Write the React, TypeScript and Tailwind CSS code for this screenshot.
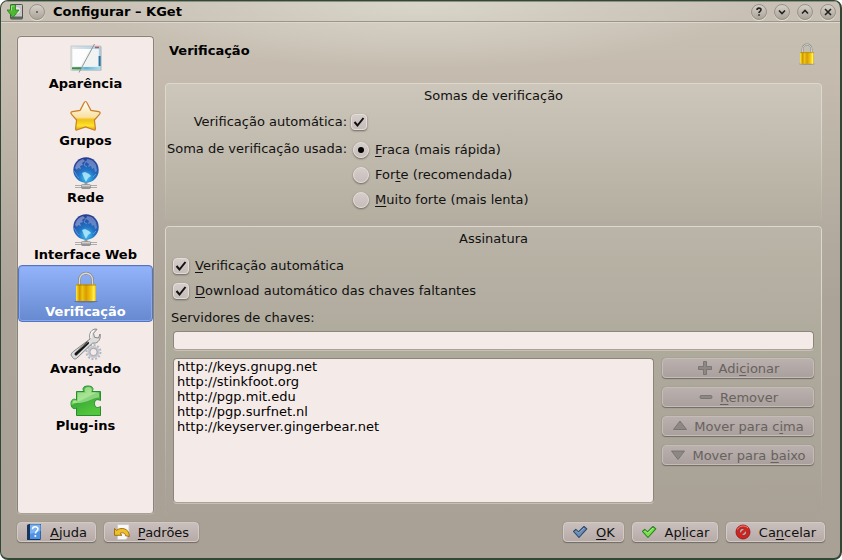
import { useId, useState, type ReactNode } from "react";

const AppearanceIcon = () => (
  <svg width="32" height="32" viewBox="0 0 32 32" aria-hidden="true">
    <defs>
      <linearGradient id="apBar" x1="0" x2="1">
        <stop offset="0" stopColor="#e4e6e6" />
        <stop offset="1" stopColor="#a9cfe2" />
      </linearGradient>
      <linearGradient id="apTask" x1="0" x2="1">
        <stop offset="0" stopColor="#d6e7dc" />
        <stop offset="0.5" stopColor="#5fb4d0" />
        <stop offset="1" stopColor="#a9def0" />
      </linearGradient>
    </defs>
    <rect x="1.5" y="3.5" width="30" height="24" fill="#9fb4bd" />
    <rect x="1" y="3" width="29.5" height="24" fill="url(#apBar)" stroke="#b9c4c8" strokeWidth="0.8" />
    <rect x="2.5" y="6" width="26" height="17.5" fill="#fdfdfd" />
    <path d="M20 6h8.500v17.500h-18.500z" fill="#f1f2f2" />
    <rect x="28.600" y="13" width="2" height="10" fill="#2d6f9d" />
    <rect x="2" y="24" width="28" height="2.600" fill="url(#apTask)" />
    <rect x="2" y="24.300" width="9" height="2" fill="#3d8a3e" />
    <rect x="25" y="3.700" width="4" height="1.500" fill="#c8505d" />
    <path d="M24.500 1 9 29.500" stroke="#858b8e" strokeWidth="0.9" />
  </svg>
);

const StarIcon = () => (
  <svg width="32" height="32" viewBox="0 0 32 32" aria-hidden="true">
    <defs>
      <linearGradient id="starFill" x1="0" y1="0" x2="0" y2="1">
        <stop offset="0" stopColor="#ffffff" />
        <stop offset="0.55" stopColor="#fae0a0" />
        <stop offset="0.64" stopColor="#f0c012" />
        <stop offset="0.85" stopColor="#fbe52e" />
        <stop offset="1" stopColor="#e59a10" />
      </linearGradient>
    </defs>
    <path
      d="M15.500 1.500c.8 0 1.200.8 1.600 1.600l3.800 7.300 7.700 1.300c1.800.3 2 1.500.8 2.600l-5 5.700 1 8.600c.1 1.300-.6 1.800-1.900 1.200L15.500 27l-8 2.800c-1.300.6-2 .1-1.900-1.200l1-8.600-5-5.700c-1.200-1.100-1-2.300.8-2.600l7.700-1.300 3.800-7.300c.4-.8.8-1.600 1.600-1.600z"
      fill="url(#starFill)"
      stroke="#c97f24"
      strokeWidth="1.200"
    />
  </svg>
);

const GlobeIcon = () => (
  <svg width="32" height="32" viewBox="0 0 32 32" aria-hidden="true">
    <defs>
      <radialGradient id="globeFill" cx="0.52" cy="0.82" r="0.8">
        <stop offset="0" stopColor="#42c5f3" />
        <stop offset="0.4" stopColor="#2274c6" />
        <stop offset="1" stopColor="#293a91" />
      </radialGradient>
      <linearGradient id="plug" x1="0" y1="0" x2="0" y2="1">
        <stop offset="0" stopColor="#ededed" />
        <stop offset="1" stopColor="#777" />
      </linearGradient>
    </defs>
    <path d="M16 25v4" stroke="#9b9b9b" strokeWidth="3" />
    <path d="M5 28.500h22M5 30.500h22" stroke="#a5a5a5" strokeWidth="0.9" />
    <circle cx="16" cy="13" r="12.700" fill="url(#globeFill)" />
    <path d="M6 8c1-3 4-5 7-6l2 2-3 2 1 2-3 1 1 3-3-1-1 2-2-2z" fill="#a6b1dc" opacity="0.6" />
    <path d="M17 2c4 0 7 2 9 6l1 6-2 1-1-4-2 1-1-3-3 1 1-3-3-2z" fill="#8ca4d7" opacity="0.6" />
    <path d="m12 16 3-1 4 2 2 2-3 2-2 4-2-4z" fill="#b5eafa" opacity="0.85" />
    <path d="M4 14c2 2 2 5 5 7M23 20l3-3M16 4l-2 4 3 2" stroke="#72a8df" fill="none" opacity="0.7" />
    <rect x="11.500" y="27.500" width="9" height="4" rx="1" fill="url(#plug)" stroke="#858585" strokeWidth="0.7" />
  </svg>
);

const LockIcon = ({ small = false }: { small?: boolean }) => (
  <svg width={small ? 22 : 32} height={small ? 22 : 32} viewBox="0 0 32 32" aria-hidden="true">
    <defs>
      <linearGradient id="lockFill" x1="0" x2="1">
        <stop offset="0" stopColor="#ffeb35" />
        <stop offset="0.18" stopColor="#d39700" />
        <stop offset="0.32" stopColor="#edc510" />
        <stop offset="0.5" stopColor="#d99b02" />
        <stop offset="0.78" stopColor="#f5cf12" />
        <stop offset="0.9" stopColor="#fff266" />
        <stop offset="1" stopColor="#dda90a" />
      </linearGradient>
    </defs>
    <ellipse cx="16" cy="30.500" rx="12" ry="1" fill="#444" opacity="0.4" />
    <path d="M9.500 15V9c0-9 13-9 13 0v6" fill="none" stroke="#888985" strokeWidth="2.800" />
    <path d="M9.500 15V9c0-9 13-9 13 0v6" fill="none" stroke="#d8dad8" strokeWidth="1.300" />
    <rect x="6" y="13.500" width="20" height="16.500" rx="0.7" fill="url(#lockFill)" />
    <path d="M6 14h20" stroke="#9c7500" strokeWidth="0.8" />
  </svg>
);

const ToolsIcon = () => (
  <svg width="32" height="32" viewBox="0 0 32 32" aria-hidden="true">
    <circle cx="23.500" cy="24" r="7" fill="none" stroke="#b4b7c2" strokeWidth="2" strokeDasharray="2 1.660" />
    <circle cx="23.500" cy="24" r="4.800" fill="#f4eae7" stroke="#c3c6cf" strokeWidth="2.500" />
    <circle cx="23.500" cy="24" r="3.600" fill="none" stroke="#8f929c" strokeWidth="0.7" />
    <path
      d="M2 28.500c-2-2 0-4 2-5.500L20 11c-1-4 0-9 5-10l2 .3-3.500 4 1 4 4 .7 1.500-4c1 3-.5 8-4.500 9l-3 .2L7 30c-2 2-4 .5-5-1.500z"
      fill="#dcdcdc"
      stroke="#7d7d7d"
      strokeWidth="0.9"
    />
    <path d="M6 26 17.500 15" stroke="#171717" strokeWidth="3" strokeLinecap="round" />
    <path d="m7 23 11-9" stroke="#9d9d9d" strokeWidth="0.8" />
    <path d="M21 10c-.5-3 0-6 3-7.500" stroke="#fff" fill="none" strokeWidth="1.200" />
  </svg>
);

const PuzzleIcon = () => (
  <svg width="32" height="32" viewBox="0 0 32 32" aria-hidden="true">
    <defs>
      <linearGradient id="puz" x1="0" y1="0" x2="0.500" y2="1">
        <stop offset="0" stopColor="#35a33b" />
        <stop offset="0.5" stopColor="#77d75b" />
        <stop offset="0.55" stopColor="#3cae38" />
        <stop offset="1" stopColor="#54c63b" />
      </linearGradient>
    </defs>
    <path
      d="M6.500 6.500H14C12 4 13 1 18 1s6 3 4 5.500h8.500v9c-3-1.500-6-1-6 3s3 5 6 3v9h-24V23C3 25 1 22 1 18.500s2.500-5.500 5.500-3.500z"
      fill="url(#puz)"
      stroke="#278d30"
      strokeWidth="1"
    />
    <path d="M7.500 7.500h8c-1-3-1-5 2.500-5.500 4 0 4 3 3 5.500h8v5C21 13 17 19 3 18c0-3 2-3 4.500-1z" fill="#d9f6ca" opacity="0.5" />
  </svg>
);

const BookIcon = () => (
  <svg width="16" height="16" viewBox="0 0 16 16" aria-hidden="true">
    <path d="M1 1 3 0h12v15l-1 1H1z" fill="#17345c" />
    <path d="M4 .5h10.500v14.500H4z" fill="#4d92e3" />
    <path d="M4 .5h10.500V7L4 10z" fill="#77b1f0" />
    <path d="M6.500 5.300C6.500 2 12 2 12 5c0 2-2.600 2.200-2.600 4.500" fill="none" stroke="#fff" strokeWidth="1.500" />
    <circle cx="9.300" cy="12" r="1" fill="#fff" />
  </svg>
);

const UndoIcon = () => (
  <svg width="16" height="16" viewBox="0 0 16 16" aria-hidden="true">
    <path d="M3.500.5h11.500v11l-3 4H3.500z" fill="#f8f8f8" stroke="#c8c8c8" strokeWidth="0.8" />
    <path
      d="M.5 4.500 2.600 6.400C6 3 15.500 3.500 15.300 12.500l-3.600-.7C11.500 9 8 8 6 9.500l2 1.800H.5z"
      fill="#f0c02a"
      stroke="#9b6907"
      strokeWidth="0.9"
    />
  </svg>
);

const TickIcon = ({ green = false }: { green?: boolean }) => (
  <svg width="16" height="16" viewBox="0 0 16 16" aria-hidden="true">
    <path
      d="m1.500 7.500 2.300-2.200L6.500 8 12 2.500l2.800 2.300L7 13.500z"
      fill={green ? "#7ae049" : "#6a8db8"}
      stroke={green ? "#248123" : "#29486c"}
      strokeWidth="1.100"
      strokeLinejoin="round"
    />
    <path d="m3 7.500 1-1 2.500 2.500 5.500-5" stroke={green ? "#c4ffa4" : "#a7bfdc"} fill="none" strokeWidth="0.7" />
  </svg>
);

const CancelIcon = () => (
  <svg width="16" height="16" viewBox="0 0 16 16" aria-hidden="true">
    <circle cx="8" cy="8" r="7" fill="#cf2522" stroke="#8e1111" strokeWidth="0.8" />
    <circle cx="8" cy="8" r="3.800" fill="#bbaaa6" stroke="#8d1412" strokeWidth="0.8" />
    <path d="m4.700 11.300 6.600-6.600" stroke="#cf2522" strokeWidth="3" />
    <path d="M2.500 5.500C4 1.500 10 .8 13 4" stroke="#f1827c" fill="none" />
  </svg>
);

const KGetIcon = () => (
  <svg width="16" height="16" viewBox="0 0 16 16" aria-hidden="true">
    <rect x="3.500" y=".5" width="12" height="14.500" rx="0.8" fill="#c6c9c6" stroke="#4d534e" />
    <path d="M4 12.500h11v2.500H4z" fill="#5e6460" />
    <circle cx="10" cy="6.500" r="4" fill="#e4e5e3" stroke="#a7aaa5" strokeWidth="0.6" />
    <path d="M3.500 1h5v5H12l-6 7.500L0 6h3.500z" fill="#4db831" stroke="#267d1e" strokeWidth="0.8" />
    <path d="M4.500 6.500V2h3" stroke="#9be57b" fill="none" />
  </svg>
);

const smallShapes = {
  add: "M6.500 1.500h3v5h5v3h-5v5h-3v-5h-5v-3h5z",
  remove: "M3 6.500h10q1 0 1 1.500t-1 1.500H3q-1 0-1-1.500t1-1.500z",
  up: "M8 3 14.500 11.500h-13z",
  down: "M1.500 4h13L8 12.500z",
};
const DimIcon = ({ shape }: { shape: keyof typeof smallShapes }) => (
  <svg width="16" height="16" viewBox="0 0 16 16" aria-hidden="true">
    <path d={smallShapes[shape]} fill="#8d8884" stroke="#77726e" strokeWidth="0.9" />
  </svg>
);

const Key = ({ children }: { children: ReactNode }) => (
  <span className="underline decoration-1 underline-offset-2">{children}</span>
);

function PushButton({ icon, children, width }: { icon: ReactNode; children: ReactNode; width: string }) {
  return (
    <button
      type="button"
      className={`flex h-5 items-center justify-center gap-2 rounded border border-[#d3c9c5] bg-linear-to-b from-[#c9bfbc] to-[#b7aba8] shadow-[0_1px_1px_#716b65,0_0_1px_#817a73] ${width}`}
    >
      {icon}
      <span className="pt-px whitespace-nowrap">{children}</span>
    </button>
  );
}

function SideButton({ shape, children }: { shape: keyof typeof smallShapes; children: ReactNode }) {
  return (
    <button
      type="button"
      disabled
      className="flex h-5 w-full items-center justify-center gap-1.5 rounded border border-[#c4bcb7] bg-linear-to-b from-[#bab0ad] to-[#aaa09d] text-[#67625e] shadow-[0_1px_1px_#716b65,0_0_1px_#817a73]"
    >
      <DimIcon shape={shape} />
      <span className="pt-px whitespace-nowrap">{children}</span>
    </button>
  );
}

const box =
  "size-4 shrink-0 appearance-none border border-[#e3dcd9] bg-linear-to-b from-[#d5cdca] to-[#c7bdbb] shadow-[0_1px_2px_#6c665f]";

function CheckBox({ id }: { id: string }) {
  const [on, setOn] = useState(true);
  return (
    <span className="relative flex size-4 shrink-0">
      <input id={id} type="checkbox" checked={on} onChange={() => setOn(!on)} className={`${box} rounded`} />
      {on && (
        <svg className="pointer-events-none absolute inset-0" width="16" height="16" viewBox="0 0 16 16" aria-hidden="true">
          <path d="m3.500 8 3 3.500 6-7.500" fill="none" stroke="#111" strokeWidth="2" />
        </svg>
      )}
    </span>
  );
}

function Group({ title, className, children }: { title: string; className: string; children: ReactNode }) {
  const titleId = useId();
  return (
    <section aria-labelledby={titleId} className={`relative min-w-0 rounded bg-linear-to-b ${className}`}>
      <div className="pointer-events-none absolute inset-0 rounded border border-b-0 border-[#ddd8cc] shadow-[0_0_1px_#8c857b] mask-b-from-20% mask-b-to-100%" />
      <h3 id={titleId} className="pt-[5px] text-center">
        {title}
      </h3>
      {children}
    </section>
  );
}

const pages = [
  { name: "Aparência", icon: <AppearanceIcon /> },
  { name: "Grupos", icon: <StarIcon /> },
  { name: "Rede", icon: <GlobeIcon /> },
  { name: "Interface Web", icon: <GlobeIcon /> },
  { name: "Verificação", icon: <LockIcon /> },
  { name: "Avançado", icon: <ToolsIcon /> },
  { name: "Plug-ins", icon: <PuzzleIcon /> },
];

const strengths = [
  { id: "weak", label: <><Key>F</Key>raca (mais rápida)</> },
  { id: "strong", label: <>For<Key>t</Key>e (recomendada)</> },
  { id: "strongest", label: <><Key>M</Key>uito forte (mais lenta)</> },
];

const servers = [
  "http://keys.gnupg.net",
  "http://stinkfoot.org",
  "http://pgp.mit.edu",
  "http://pgp.surfnet.nl",
  "http://keyserver.gingerbear.net",
];

const windowControls = [
  { name: "Ajuda da janela", path: "M6.500 6.500c0-2.500 4-2.500 4-.2 0 1.500-2 1.500-2 3.200M8.500 10.800v1.500" },
  { name: "Minimizar", path: "m5.500 7 3 3 3-3" },
  { name: "Maximizar", path: "m5.500 10 3-3 3 3" },
  { name: "Fechar", path: "m5.500 5.500 6 6m0-6-6 6" },
];

const orb = "size-4 rounded-full border border-[#98928a] bg-linear-to-b from-[#d6d1c9] to-[#aaa398] shadow-[0_1px_0_#e4dfd5]";

export default function App() {
  const [strength, setStrength] = useState("weak");
  const [page, setPage] = useState("Verificação");

  return (
    <div className="flex min-h-screen flex-col overflow-hidden rounded-lg border border-r-2 border-b-2 border-[#314837] bg-[radial-gradient(ellipse_330px_68px_at_50%_0,#dad6ca,transparent),linear-gradient(to_bottom,#c9c1b5_0,#c4bbae_80px,#aba398_300px,#a9a196_100%)] font-['DejaVu_Sans',sans-serif] text-[13px] leading-4 text-[#111]">
      <header className="flex h-[21px] items-center border-t border-b border-t-[#8d9184] border-b-[#9c958a] pr-1 pl-1.5 shadow-[0_1px_0_#dcd6cb]">
        <KGetIcon />
        <button type="button" aria-label="Menu da janela" className={`${orb} ml-1.5 flex items-center justify-center`}>
          <span className="size-0.5 rounded-full bg-[#555]" />
        </button>
        <h1 className="ml-2 flex-1 text-[13px] font-bold text-black">Configurar – KGet</h1>
        <div className="flex gap-[7px]">
          {windowControls.map((c) => (
            <button key={c.name} type="button" aria-label={c.name} className={`${orb} flex items-center justify-center`}>
              <svg className="shrink-0" width="16" height="16" viewBox="0.5 0.5 16 16" aria-hidden="true">
                <path d={c.path} fill="none" stroke="#222" strokeWidth="1.600" />
              </svg>
            </button>
          ))}
        </div>
      </header>

      <div className="flex flex-1 gap-[11px] pt-3.5 pr-[18px] pl-4">
        <nav className="w-[137px] shrink-0 rounded border border-[#8b8378] border-b-[#a9a196] bg-[#f4eae7] shadow-[0_0_1px_#eee]">
          {pages.map((p) => (
            <button
              key={p.name}
              type="button"
              onClick={() => setPage(p.name)}
              aria-current={p.name === page ? "page" : undefined}
              className={`flex h-[57px] w-full flex-col items-center gap-px rounded-sm border pt-[5px] font-bold ${
                p.name === page
                  ? "border-[#5275bd] bg-linear-to-b from-[#93b4fb] to-[#6689cf] text-white shadow-[inset_0_0_0_1px_#87a8ee]"
                  : "border-transparent text-black"
              }`}
            >
              {p.icon}
              <span className="whitespace-nowrap">{p.name}</span>
            </button>
          ))}
        </nav>

        <main className="flex min-w-0 flex-1 flex-col">
          <div className="flex h-[47px] items-start justify-between pt-[7px] pr-1 pl-1">
            <h2 className="font-bold text-black">Verificação</h2>
            <LockIcon small />
          </div>

          <Group title="Somas de verificação" className="h-[138px] from-[#cdc6ba] to-[#b4aea1]">
            <div className="grid grid-cols-[auto_1fr] gap-x-1 pt-2.5 pl-0.5">
              <label htmlFor="auto-sum" className="text-right whitespace-nowrap">
                Verificação automática:
              </label>
              <CheckBox id="auto-sum" />
              <span id="sum-label" className="pt-[11px] text-right whitespace-nowrap">
                Soma de verificação usada:
              </span>
              <div role="radiogroup" aria-labelledby="sum-label" className="flex flex-col gap-[9px] pt-3 pl-0.5">
                {strengths.map((s) => (
                  <div key={s.id} className="flex items-center gap-1.5">
                    <span className="relative flex size-4">
                      <input
                        id={s.id}
                        type="radio"
                        name="strength"
                        checked={strength === s.id}
                        onChange={() => setStrength(s.id)}
                        className={`${box} rounded-full`}
                      />
                      {strength === s.id && (
                        <span className="pointer-events-none absolute inset-0 m-auto size-1.5 rounded-full bg-black" />
                      )}
                    </span>
                    <label htmlFor={s.id}>{s.label}</label>
                  </div>
                ))}
              </div>
            </div>
          </Group>

          <Group
            title="Assinatura"
            className="mt-[5px] flex-1 from-[#bbb4a8] via-[#aeaa9c] via-40% to-[#a9a196]"
          >
            <div className="px-2 pt-[11px]">
              <div className="flex items-center gap-1.5">
                <CheckBox id="auto-verify" />
                <label htmlFor="auto-verify">
                  <Key>V</Key>erificação automática
                </label>
              </div>
              <div className="mt-[9px] flex items-center gap-1.5">
                <CheckBox id="auto-download" />
                <label htmlFor="auto-download">
                  <Key>D</Key>ownload automático das chaves faltantes
                </label>
              </div>
              <label htmlFor="server" className="-ml-0.5 mt-[11px] block">
                Servidores de chaves:
              </label>
              <input
                id="server"
                type="text"
                className="mt-[5px] block h-[19px] w-full rounded border border-[#8d857b] border-b-[#aaa297] bg-[#f4eae7] px-1 shadow-[0_1px_0_#c8c2b6]"
              />
              <div className="mt-2 flex gap-2">
                <select
                  size={5}
                  aria-label="Lista de servidores de chaves"
                  className="h-[145px] min-w-0 flex-1 appearance-none overflow-hidden rounded border border-[#8d857b] border-b-[#aaa297] bg-[#f4eae7] px-[3px] text-black shadow-[0_1px_0_#c8c2b6]"
                >
                  {servers.map((s) => (
                    <option key={s} className="h-[15px] min-h-0 p-0 leading-[15px]">
                      {s}
                    </option>
                  ))}
                </select>
                <div className="flex w-[152px] flex-col gap-[9px]">
                  <SideButton shape="add">
                    Adi<Key>c</Key>ionar
                  </SideButton>
                  <SideButton shape="remove">
                    <Key>R</Key>emover
                  </SideButton>
                  <SideButton shape="up">
                    Mover para c<Key>i</Key>ma
                  </SideButton>
                  <SideButton shape="down">
                    Mover para <Key>b</Key>aixo
                  </SideButton>
                </div>
              </div>
            </div>
          </Group>
        </main>
      </div>

      <footer className="flex justify-between pt-2 pr-[15px] pb-4 pl-4">
        <div className="flex gap-2">
          <PushButton width="w-[79px]" icon={<BookIcon />}>
            <Key>A</Key>juda
          </PushButton>
          <PushButton width="w-[95px]" icon={<UndoIcon />}>
            <Key>P</Key>adrões
          </PushButton>
        </div>
        <div className="flex gap-2">
          <PushButton width="w-[61px]" icon={<TickIcon />}>
            <Key>O</Key>K
          </PushButton>
          <PushButton width="w-[86px]" icon={<TickIcon green />}>
            Ap<Key>l</Key>icar
          </PushButton>
          <PushButton width="w-[99px]" icon={<CancelIcon />}>
            Ca<Key>n</Key>celar
          </PushButton>
        </div>
      </footer>
    </div>
  );
}
